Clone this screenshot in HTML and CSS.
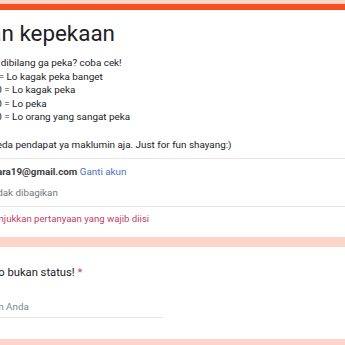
FILE: index.html
```html
<!DOCTYPE html>
<html lang="id">
<head>
<meta charset="utf-8">
<title>Ujian kepekaan</title>
<link rel="stylesheet" href="styles.css">
</head>
<body>
<div class="page">
  <section class="card header-card">
    <div class="content">
      <h1 class="title">Ujian kepekaan</h1>
      <div class="desc">
        <div>Lo suka dibilang ga peka? coba cek!</div>
        <div>0 sd 20 = Lo kagak peka banget</div>
        <div>21 sd 40 = Lo kagak peka</div>
        <div>41 sd 60 = Lo peka</div>
        <div>61 sd 80 = Lo orang yang sangat peka</div>
        <div class="blank">&nbsp;</div>
        <div>Kalau beda pendapat ya maklumin aja. Just for fun shayang:)</div>
      </div>
    </div>
    <div class="divider"></div>
    <div class="content account">
      <div class="email-row"><span class="email">rahmasara19@gmail.com</span> <span class="switch">Ganti akun</span></div>
      <div class="shared-row">
        <svg class="cloud" viewBox="0 0 24 24" width="14" height="14"><path fill="#5f6368" d="M19.35 10.04A7.49 7.49 0 0 0 12 4c-1.48 0-2.85.43-4.01 1.17l1.46 1.46A5.497 5.497 0 0 1 17.5 11v.5H19c1.66 0 3 1.34 3 3 0 1.13-.64 2.11-1.56 2.62l1.45 1.45C23.16 17.65 24 16.17 24 14.5c0-2.64-2.05-4.78-4.65-4.96zM3 5.27l2.75 2.74C2.56 8.15 0 10.77 0 14c0 3.31 2.69 6 6 6h11.73l2 2L21 20.73 4.27 4 3 5.27zM7.73 10l8 8H6c-2.21 0-4-1.790-4-4s1.79-4 4-4h1.73z"/></svg>
        <span>Tidak dibagikan</span>
      </div>
    </div>
    <div class="divider"></div>
    <div class="content required-note">* Menunjukkan pertanyaan yang wajib diisi</div>
  </section>

  <section class="card question-card">
    <div class="content">
      <div class="question">Pacar lo bukan status! <span class="star">*</span></div>
      <div class="answer"><span class="placeholder">Jawaban Anda</span></div>
    </div>
  </section>
</div>
</body>
</html>
```

FILE: styles.css
```css
html, body {
  margin: 0;
  padding: 0;
}
body {
  background: #fcd5c8;
  overflow: hidden;
  width: 345px;
  height: 345px;
  font-family: Roboto, "Liberation Sans", Arial, sans-serif;
  color: #202124;
}
.page {
  padding-top: 4px;
  display: flex;
  flex-direction: column;
  gap: 10px;
}
.card {
  background: #ffffff;
  width: 345px;
}
.header-card {
  border-top: 6px solid #f4511e;
}
.content {
  margin-left: -36px;
}
.title {
  margin: 0;
  padding-top: 9px;
  font-size: 22.4px;
  line-height: 28px;
  font-weight: 400;
  white-space: nowrap;
}
.desc {
  padding-top: 9px;
  padding-bottom: 7px;
  font-size: 9.9px;
  line-height: 13.6px;
  white-space: nowrap;
}
.divider {
  height: 1px;
  background: #e6e6e6;
}
.account {
  padding-top: 6px;
  padding-bottom: 6px;
  font-size: 9.8px;
  line-height: 14px;
  white-space: nowrap;
  display: flex;
  flex-direction: column;
  gap: 7px;
}
.email {
  font-weight: 700;
  color: #3c4043;
}
.switch {
  color: #4d70c2;
}
.shared-row {
  display: flex;
  align-items: center;
  gap: 11px;
  color: #70757a;
}
.required-note {
  padding-top: 5px;
  padding-bottom: 11px;
  padding-left: 4px;
  font-size: 9.6px;
  line-height: 14px;
  color: #c5405f;
  white-space: nowrap;
}
.question-card .content {
  padding-top: 18px;
  padding-bottom: 21px;
}
.question {
  font-size: 11.2px;
  line-height: 16px;
  white-space: nowrap;
}
.star {
  color: #c5405f;
}
.answer {
  margin-top: 19px;
  width: 199px;
  border-bottom: 1px solid #e6e6e6;
  padding-bottom: 3px;
  font-size: 9.8px;
  line-height: 14px;
}
.placeholder {
  color: #80868b;
}
```
